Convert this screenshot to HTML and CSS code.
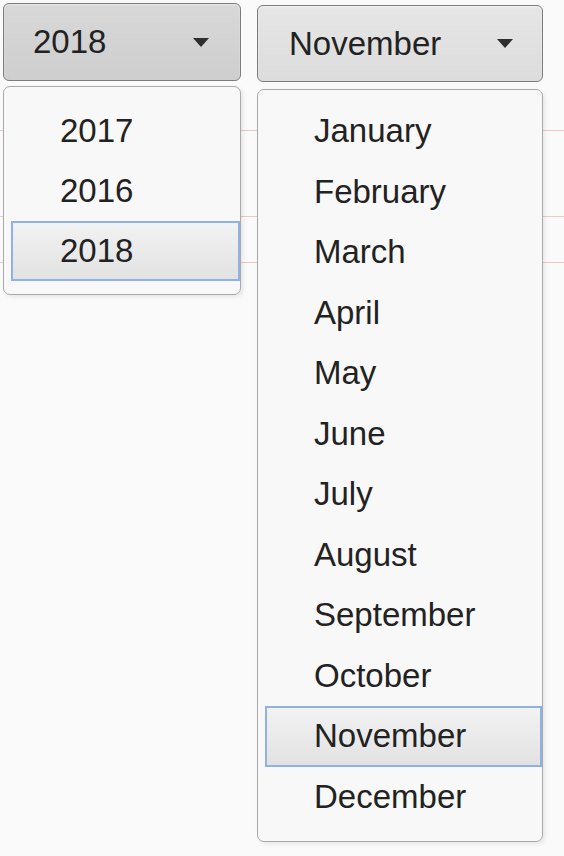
FILE: index.html
```html
<!DOCTYPE html>
<html>
<head>
<meta charset="utf-8">
<link rel="stylesheet" href="styles.css">
</head>
<body>
<div class="page">
  <div class="col col-year">
    <div class="btn btn-year"><span>2018</span><span class="caret"></span></div>
    <ul class="list list-year">
      <li class="opt">2017</li>
      <li class="opt">2016</li>
      <li class="opt sel">2018</li>
    </ul>
  </div>
  <div class="col col-month">
    <div class="btn btn-month"><span>November</span><span class="caret"></span></div>
    <ul class="list list-month">
      <li class="opt">January</li>
      <li class="opt">February</li>
      <li class="opt">March</li>
      <li class="opt">April</li>
      <li class="opt">May</li>
      <li class="opt">June</li>
      <li class="opt">July</li>
      <li class="opt">August</li>
      <li class="opt">September</li>
      <li class="opt">October</li>
      <li class="opt sel">November</li>
      <li class="opt">December</li>
    </ul>
  </div>
</div>
</body>
</html>
```
FILE: styles.css
```css
html, body {
  margin: 0;
  padding: 0;
}
body {
  width: 564px;
  height: 856px;
  overflow: hidden;
  background-color: #fafafa;
  background-image:
    linear-gradient(#f1c6c8, #f1c6c8),
    linear-gradient(#f1c6c8, #f1c6c8),
    linear-gradient(#f1c6c8, #f1c6c8);
  background-size: 100% 1px;
  background-position: 0 130px, 0 216px, 0 262px;
  background-repeat: no-repeat;
  font-family: "Liberation Sans", Arial, sans-serif;
  color: #222;
}
.page {
  display: flex;
  align-items: flex-start;
  gap: 16px;
  padding: 3px 0 0 3px;
}
.col-year {
  width: 238px;
}
.col-month {
  width: 286px;
  margin-top: 2px;
}
.btn {
  box-sizing: border-box;
  display: flex;
  align-items: center;
  justify-content: space-between;
  border: 1px solid #7c7c7c;
  border-radius: 6px;
  font-size: 33px;
  box-shadow: inset 0 1px 2px rgba(255,255,255,0.5);
}
.btn-year {
  height: 78px;
  padding: 0 31px 0 29px;
  background: linear-gradient(#d8d8d8, #cecece);
}
.btn-month {
  height: 77px;
  padding: 0 29px 0 31px;
  background: linear-gradient(#e6e6e6, #dcdcdc);
}
.caret {
  width: 0;
  height: 0;
  border-left: 8px solid transparent;
  border-right: 8px solid transparent;
  border-top: 9px solid #2e2e2e;
}
.list {
  list-style: none;
  margin: 0;
  box-sizing: border-box;
  border: 1px solid #a9a9a9;
  border-radius: 7px;
  background: #f8f8f8;
  box-shadow: 2px 2px 4px rgba(0,0,0,0.08);
}
.list-year {
  margin-top: 5px;
  padding: 14px 0 13px 0;
}
.list-month {
  margin-top: 7px;
  padding: 11px 0 14px 0;
}
.opt {
  box-sizing: border-box;
  display: flex;
  align-items: center;
  margin-left: 7px;
  padding-left: 47px;
  border: 2px solid transparent;
  font-size: 33px;
  color: #222;
}
.list-year .opt {
  height: 60px;
}
.list-month .opt {
  height: 60.5px;
}
.opt.sel {
  border-color: #8fb2e2;
  background: linear-gradient(#f2f2f2, #e2e2e2);
}
```
